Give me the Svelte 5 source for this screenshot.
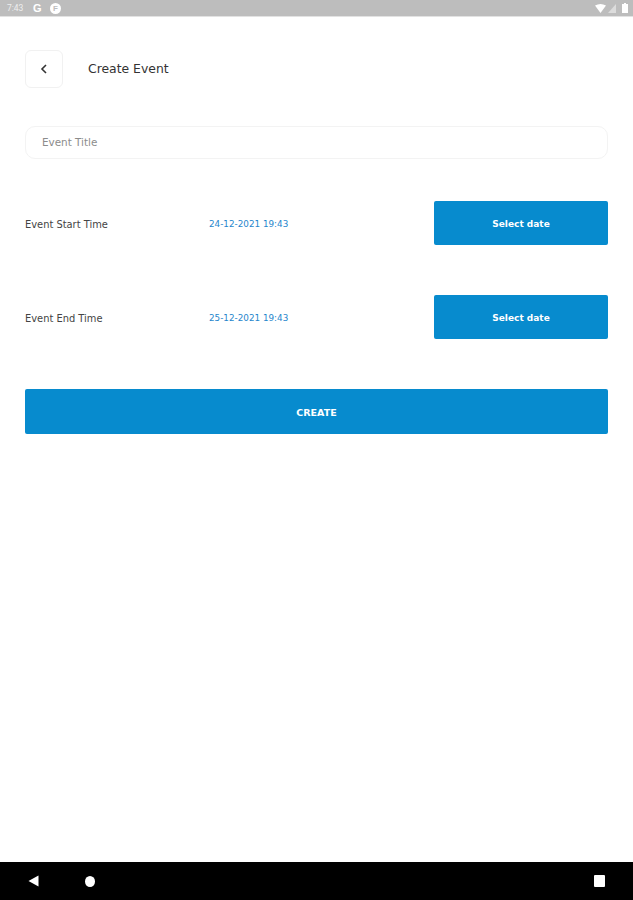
<script>
	let title = $state('');
	const rows = [
		{ label: 'Event Start Time', value: '24-12-2021 19:43' },
		{ label: 'Event End Time', value: '25-12-2021 19:43' }
	];
</script>

<div class="screen">
	<div class="status">
		<div class="status-left">
			<span class="clock">7:43</span>
			<span class="g">G</span>
			<span class="badge">F</span>
		</div>
		<div class="status-right">
			<svg width="11" height="9" viewBox="0 0 11 9"><path d="M0 1.5 Q5.5 -1.5 11 1.5 L5.5 9 Z" fill="#fff" /></svg>
			<svg width="8" height="9" viewBox="0 0 8 9"><path d="M8 0 V9 H0 Z" fill="#dcdcdc" /></svg>
			<svg class="battery" width="6" height="10" viewBox="0 0 6 10"><path d="M2 0 H4 V1 H6 V10 H0 V1 H2 Z" fill="#fff" /></svg>
		</div>
	</div>

	<main>
		<header>
			<button class="back" aria-label="Back">
				<svg width="8" height="10" viewBox="0 0 8 10"><path d="M6 1 L2 5 L6 9" fill="none" stroke="#333" stroke-width="1.6" /></svg>
			</button>
			<h1>Create Event</h1>
		</header>

		<input class="title" type="text" placeholder="Event Title" bind:value={title} />

		{#each rows as row}
			<div class="row">
				<span class="label">{row.label}</span>
				<span class="value">{row.value}</span>
				<button class="primary date">Select date</button>
			</div>
		{/each}

		<button class="primary create">CREATE</button>
	</main>

	<nav>
		<svg class="nav-back" width="11" height="12" viewBox="0 0 11 12"><path d="M10.5 0.5 V11.5 L0.5 6 Z" fill="#fff" /></svg>
		<span class="home"></span>
		<span class="recent"></span>
	</nav>
</div>

<style>
	:global(body) {
		margin: 0;
		background: #fff;
	}

	.screen {
		width: 633px;
		height: 900px;
		display: flex;
		flex-direction: column;
		font-family: "DejaVu Sans", sans-serif;
	}

	.status {
		height: 16px;
		background: #bdbdbd;
		border-bottom: 1px solid #e2e2e2;
		display: flex;
		justify-content: space-between;
		align-items: center;
		padding: 0 5px 0 7px;
		flex-shrink: 0;
	}

	.status-left,
	.status-right {
		display: flex;
		align-items: center;
	}

	.status-right {
		gap: 2px;
	}

	.battery {
		margin-left: 4px;
	}

	.clock {
		font-family: Roboto, sans-serif;
		font-size: 8.5px;
		color: #eee;
		width: 26px;
	}

	.g {
		font-family: "Liberation Sans", sans-serif;
		font-weight: 700;
		font-size: 11px;
		color: #fff;
		width: 17px;
	}

	.badge {
		width: 11px;
		height: 11px;
		border-radius: 50%;
		background: #fff;
		color: #bdbdbd;
		font-family: "Liberation Sans", sans-serif;
		font-weight: 700;
		font-size: 8px;
		display: flex;
		align-items: center;
		justify-content: center;
	}

	main {
		flex: 1;
		padding: 33px 25px 0 25px;
		display: flex;
		flex-direction: column;
	}

	header {
		display: flex;
		align-items: center;
		gap: 25px;
	}

	.back {
		width: 38px;
		height: 38px;
		padding: 0;
		margin: 0;
		background: #fff;
		border: 1px solid #f1f1f1;
		border-radius: 6px;
		display: flex;
		align-items: center;
		justify-content: center;
	}

	h1 {
		margin: 0 0 2px;
		font-size: 12.4px;
		font-weight: 400;
		color: #333;
	}

	.title {
		box-sizing: border-box;
		width: 100%;
		height: 33px;
		margin: 38px 0 42px;
		padding: 0 16px 1px;
		border: 1px solid #f3f3f3;
		border-radius: 10px;
		background: #fff;
		font-family: inherit;
		font-size: 10.4px;
		color: #333;
		outline: none;
	}

	.title::placeholder {
		color: #8c8c8c;
		opacity: 1;
	}

	.row {
		display: flex;
		align-items: center;
		height: 44px;
		margin-bottom: 50px;
	}

	.label {
		width: 184px;
		padding-top: 2px;
		font-size: 9.9px;
		color: #444;
	}

	.value {
		flex: 1;
		padding-top: 2px;
		font-size: 8.8px;
		color: #1f86cc;
	}

	.primary {
		border: none;
		border-radius: 2px;
		background: #078bce;
		color: #fff;
		font-family: inherit;
		font-weight: 700;
		padding: 1px 0 0;
	}

	.date {
		width: 174px;
		height: 44px;
		font-size: 9px;
	}

	.create {
		width: 100%;
		height: 45px;
		font-size: 9.5px;
	}

	nav {
		height: 38px;
		background: #000;
		flex-shrink: 0;
		display: flex;
		align-items: center;
		padding: 0 28px;
	}

	.nav-back {
		margin-right: 46px;
	}

	.home {
		width: 10px;
		height: 11px;
		border-radius: 50%;
		background: #fff;
	}

	.recent {
		width: 11px;
		height: 12px;
		border-radius: 1px;
		background: #fff;
		margin-left: auto;
	}
</style>
